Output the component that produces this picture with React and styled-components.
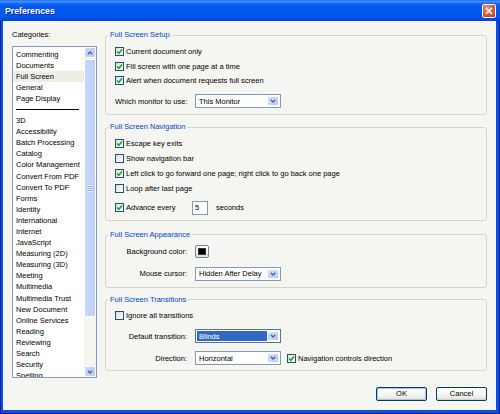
import React from 'react';
import styled, { createGlobalStyle } from 'styled-components';

const Global = createGlobalStyle`
  html, body { margin: 0; padding: 0; }
  body {
    width: 500px; height: 414px; overflow: hidden;
    font-family: 'Liberation Sans', Arial, sans-serif;
    font-size: 7.5px; color: #000;
  }
  * { box-sizing: border-box; }
`;

const Window = styled.div`
  width: 500px; height: 414px;
  display: flex; flex-direction: column;
`;

const TitleBar = styled.div`
  height: 21px; flex: none;
  display: flex; align-items: center; justify-content: space-between;
  padding: 0 4px 0 5px;
  background: linear-gradient(180deg, #0A5FF0 0%, #4D9BFF 6%, #2C7BFB 12%, #0A5DF0 22%, #0058EE 50%, #0055E8 80%, #0045CE 100%);
`;

const Title = styled.div`
  color: #fff; font-weight: bold; font-size: 8.7px;
  text-shadow: 1px 1px 0 #0B2A98;
`;

const CloseBtn = styled.div`
  width: 14px; height: 14px; border-radius: 2px;
  border: 1px solid #fff;
  background: radial-gradient(circle at 35% 30%, #F19A7A 0%, #E0603A 45%, #C63A18 100%);
  display: flex; align-items: center; justify-content: center;
`;

const Frame = styled.div`
  flex: 1; display: flex;
  padding: 0 4px 4.5px 3px;
  background: #0850DE;
  box-shadow: inset 1px 0 0 #0020B0, inset -1px 0 0 #001A9C, inset 0 -1px 0 #001A9C;
`;

const Client = styled.div`
  flex: 1; display: flex; flex-direction: column;
  background: #F5F5F1;
  padding: 9px 9px 0 9px;
`;

const Main = styled.div`
  display: flex; gap: 8px; align-items: flex-start;
`;

const LeftCol = styled.div`
  width: 85px; flex: none;
  display: flex; flex-direction: column;
`;

const Label = styled.div`
  line-height: 10px; height: 10px; margin-bottom: 6px; white-space: nowrap;
`;

const ListBox = styled.div`
  height: 332px; border: 1px solid #7F9DB9; background: #fff;
  display: flex;
`;

const Items = styled.div`
  flex: 1; overflow: hidden; padding-top: 1.5px;
`;

const Item = styled.div`
  height: 11.1px; line-height: 11.1px; padding-left: 3px; white-space: nowrap;
  background: ${p => (p.$selected ? '#EEEDE6' : 'transparent')};
`;

const Separator = styled.div`
  height: 11.1px; display: flex; align-items: center; padding-left: 3px;
  &::after { content: ''; width: 63px; height: 1px; background: #000; }
`;

const ScrollBar = styled.div`
  width: 12px; flex: none;
  display: flex; flex-direction: column;
  background: #F5F5F0;
`;

const ScrollBtn = styled.div`
  height: 11px; flex: none;
  border: 1px solid #fff; border-radius: 2px;
  background: linear-gradient(90deg, #C8D8FC, #B8CCF8);
  display: flex; align-items: center; justify-content: center;
`;

const Thumb = styled.div`
  height: 258px; flex: none; margin-top: 1px;
  border: 1px solid #fff; border-radius: 2px;
  background: linear-gradient(90deg, #C9D9FD, #BACEF9);
  display: flex; align-items: center; justify-content: center;
`;

const Grip = styled.div`
  width: 5px; height: 7px;
  background: repeating-linear-gradient(180deg, #EEF4FE 0 1px, #8CAEF0 1px 2px);
`;

const Track = styled.div`
  flex: 1;
`;

const RightCol = styled.div`
  flex: 1; min-width: 0;
  display: flex; flex-direction: column; gap: 7px;
`;

const Group = styled.fieldset`
  margin: ${p => p.$mt || 0}px 0 0 0;
  padding: 0; min-width: 0;
  border: 1px solid #D6D3C5; border-radius: 3px;
`;

const Legend = styled.legend`
  margin-left: 2px; padding: 0 2px;
  color: #0046D5; line-height: 10px; font-size: 7.5px;
`;

const Body = styled.div`
  padding: ${p => p.$pt}px 9px ${p => p.$pb}px 9px;
  display: flex; flex-direction: column;
`;

const CheckRow = styled.div`
  height: 14.8px; display: flex; align-items: center; gap: 2px; white-space: nowrap;
  width: ${p => (p.$w ? `${p.$w}px` : 'auto')};
  flex: none;
`;

const Box = styled.span`
  width: 9px; height: 9px; flex: none;
  border: 1px solid #1C5180;
  background: linear-gradient(135deg, #DCDCD7, #FFFFFF);
  display: flex; align-items: center; justify-content: center;
`;

const FormRow = styled.div`
  display: grid; grid-template-columns: 72px 86px auto;
  column-gap: 8px; align-items: center;
  margin-top: ${p => p.$mt || 0}px;
  height: ${p => p.$h || 14}px;
`;

const FormLabel = styled.div`
  text-align: right; white-space: nowrap;
`;

const SelectBox = styled.div`
  height: 14px; border: 1px solid ${p => (p.$active ? '#5A7396' : '#7F9DB9')};
  background: #fff; padding: 1px;
  display: flex; align-items: stretch;
`;

const SelectText = styled.div`
  flex: 1; display: flex; align-items: center; padding-left: 2px;
  white-space: nowrap;
  background: ${p => (p.$active ? '#316AC5' : 'transparent')};
  color: ${p => (p.$active ? '#fff' : '#000')};
`;

const DropBtn = styled.div`
  width: 12px; flex: none;
  border: 1px solid #fff; border-radius: 2px;
  background: linear-gradient(135deg, #D6E3FE, #B3C8F6);
  display: flex; align-items: center; justify-content: center;
`;

const InlineRow = styled.div`
  display: flex; align-items: center; height: 14px; margin-top: 5px;
`;

const NumInput = styled.div`
  width: 16px; height: 14px; border: 1px solid #7F9DB9; background: #fff;
  padding-left: 2px; display: flex; align-items: center;
`;

const Suffix = styled.span`
  margin-left: 8px;
`;

const Swatch = styled.div`
  width: 14px; height: 13px; border: 1px solid #6E84A3; border-radius: 2px;
  background: linear-gradient(#FFFFFF, #E4E4DC);
  padding: 2px;
  display: flex;
`;

const SwatchColor = styled.div`
  flex: 1; background: #000; border: 1px solid #333;
`;

const SideCheck = styled.div`
  margin-left: -2px; display: flex; align-items: center; gap: 2px; white-space: nowrap;
`;

const Footer = styled.div`
  display: flex; justify-content: flex-end; gap: 9px;
  margin-top: 8.5px;
`;

const Btn = styled.button`
  width: 51px; height: 14px; padding: 0; margin: 0;
  border: 1px solid #003C74; border-radius: 2px;
  background: linear-gradient(#FFFFFF 0%, #F4F4F0 60%, #E3E0D6 100%);
  font-family: 'Liberation Sans', Arial, sans-serif; font-size: 7.5px; color: #000;
  box-shadow: ${p => (p.$default ? 'inset 0 0 0 1px #A9C3EE' : 'inset 0 -1px 0 #D8D2C4')};
`;

const Chevron = ({ up }) => (
  <svg width="6" height="4" viewBox="0 0 6 4">
    <path d={up ? 'M0.8 3.3 L3 1 L5.2 3.3' : 'M0.8 0.8 L3 3 L5.2 0.8'} fill="none" stroke="#4D6185" strokeWidth="1.3" />
  </svg>
);

const Check = ({ checked }) => (
  <Box>
    {checked && (
      <svg width="7" height="7" viewBox="0 0 7 7">
        <path d="M1 3.4 L2.8 5.3 L6 1.5" fill="none" stroke="#21A121" strokeWidth="1.5" />
      </svg>
    )}
  </Box>
);

const Select = ({ value, active }) => (
  <SelectBox $active={active}>
    <SelectText $active={active}>{value}</SelectText>
    <DropBtn><Chevron /></DropBtn>
  </SelectBox>
);

const categoriesTop = ['Commenting', 'Documents', 'Full Screen', 'General', 'Page Display'];
const categoriesRest = [
  '3D', 'Accessibility', 'Batch Processing', 'Catalog', 'Color Management',
  'Convert From PDF', 'Convert To PDF', 'Forms', 'Identity', 'International',
  'Internet', 'JavaScript', 'Measuring (2D)', 'Measuring (3D)', 'Meeting',
  'Multimedia', 'Multimedia Trust', 'New Document', 'Online Services', 'Reading',
  'Reviewing', 'Search', 'Security', 'Spelling',
];

export default function App() {
  return (
    <>
      <Global />
      <Window>
        <TitleBar>
          <Title>Preferences</Title>
          <CloseBtn>
            <svg width="8" height="8" viewBox="0 0 8 8">
              <path d="M1 1 L7 7 M7 1 L1 7" stroke="#fff" strokeWidth="1.6" />
            </svg>
          </CloseBtn>
        </TitleBar>
        <Frame>
          <Client>
            <Main>
              <LeftCol>
                <Label>Categories:</Label>
                <ListBox>
                  <Items>
                    {categoriesTop.map(c => (
                      <Item key={c} $selected={c === 'Full Screen'}>{c}</Item>
                    ))}
                    <Separator />
                    {categoriesRest.map(c => (
                      <Item key={c}>{c}</Item>
                    ))}
                  </Items>
                  <ScrollBar>
                    <ScrollBtn><Chevron up /></ScrollBtn>
                    <Thumb><Grip /></Thumb>
                    <Track />
                    <ScrollBtn><Chevron /></ScrollBtn>
                  </ScrollBar>
                </ListBox>
              </LeftCol>

              <RightCol>
                <Group>
                  <Legend>Full Screen Setup</Legend>
                  <Body $pt={4} $pb={6}>
                    <CheckRow><Check checked />Current document only</CheckRow>
                    <CheckRow><Check checked />Fill screen with one page at a time</CheckRow>
                    <CheckRow><Check checked />Alert when document requests full screen</CheckRow>
                    <FormRow $mt={6}>
                      <FormLabel>Which monitor to use:</FormLabel>
                      <Select value="This Monitor" />
                    </FormRow>
                  </Body>
                </Group>

                <Group>
                  <Legend>Full Screen Navigation</Legend>
                  <Body $pt={4} $pb={5}>
                    <CheckRow><Check checked />Escape key exits</CheckRow>
                    <CheckRow><Check />Show navigation bar</CheckRow>
                    <CheckRow><Check checked />Left click to go forward one page; right click to go back one page</CheckRow>
                    <CheckRow><Check />Loop after last page</CheckRow>
                    <InlineRow>
                      <CheckRow $w={77}><Check checked />Advance every</CheckRow>
                      <NumInput>5</NumInput>
                      <Suffix>seconds</Suffix>
                    </InlineRow>
                  </Body>
                </Group>

                <Group $mt={2}>
                  <Legend>Full Screen Appearance</Legend>
                  <Body $pt={5} $pb={6}>
                    <FormRow>
                      <FormLabel>Background color:</FormLabel>
                      <div><Swatch><SwatchColor /></Swatch></div>
                    </FormRow>
                    <FormRow $mt={8}>
                      <FormLabel>Mouse cursor:</FormLabel>
                      <Select value="Hidden After Delay" />
                    </FormRow>
                  </Body>
                </Group>

                <Group>
                  <Legend>Full Screen Transitions</Legend>
                  <Body $pt={4} $pb={5}>
                    <CheckRow><Check />Ignore all transitions</CheckRow>
                    <FormRow $mt={6}>
                      <FormLabel>Default transition:</FormLabel>
                      <Select value="Blinds" active />
                    </FormRow>
                    <FormRow $mt={8}>
                      <FormLabel>Direction:</FormLabel>
                      <Select value="Horizontal" />
                      <SideCheck><Check checked />Navigation controls direction</SideCheck>
                    </FormRow>
                  </Body>
                </Group>
              </RightCol>
            </Main>
            <Footer>
              <Btn $default>OK</Btn>
              <Btn>Cancel</Btn>
            </Footer>
          </Client>
        </Frame>
      </Window>
    </>
  );
}
